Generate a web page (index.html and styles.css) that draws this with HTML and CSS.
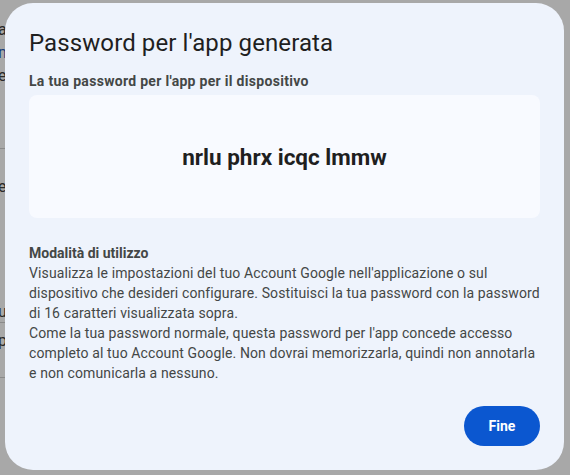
FILE: index.html
```html
<!DOCTYPE html>
<html lang="it">
<head>
<meta charset="utf-8">
<title>Password per l'app generata</title>
<link rel="stylesheet" href="styles.css">
</head>
<body>
<div class="page">
  <div class="strip">
    <div class="bg-line t1">a</div>
    <div class="bg-line t2">m</div>
    <div class="bg-line t3">er</div>
    <div class="rule r1"></div>
    <div class="bg-line t4">e</div>
    <div class="bg-line t5">u</div>
    <div class="rule r2"></div>
    <div class="bg-line t6">p</div>
    <div class="rule r3"></div>
  </div>
</div>
<div class="dialog" role="dialog">
  <h1 class="title">Password per l'app generata</h1>
  <div class="label">La tua password per l'app per il dispositivo</div>
  <div class="pwbox"><span class="pw">nrlu phrx icqc lmmw</span></div>
  <div class="howto">
    <div class="howto-title">Modalità di utilizzo</div>
    <p class="howto-text">Visualizza le impostazioni del tuo Account Google nell'applicazione o sul dispositivo che desideri configurare. Sostituisci la tua password con la password di 16 caratteri visualizzata sopra.</p>
    <p class="howto-text">Come la tua password normale, questa password per l'app concede accesso completo al tuo Account Google. Non dovrai memorizzarla, quindi non annotarla e non comunicarla a nessuno.</p>
  </div>
  <div class="actions"><button class="btn">Fine</button></div>
</div>
</body>
</html>
```
FILE: styles.css
```css
html, body {
  margin: 0;
  padding: 0;
  height: 100%;
}
body {
  background: #a8a8a8;
  font-family: Roboto, "Liberation Sans", Arial, sans-serif;
  overflow: hidden;
}
.page {
  height: 475px;
}
.strip {
  width: 12px;
  overflow: hidden;
  display: flex;
  flex-direction: column;
  padding-top: 20px;
}
.bg-line {
  font-size: 16px;
  line-height: 20px;
  color: #2a2a2a;
  white-space: nowrap;
  margin-left: -2px;
}
.t2 { margin-top: 3px; color: #173b7a; }
.t3 { margin-top: 3px; }
.rule { height: 1px; background: #8a8a8a; width: 12px; }
.r1 { margin-top: 62px; }
.t4 { margin-top: 28px; }
.t5 { margin-top: 105px; }
.r2 { margin-top: 0px; }
.t6 { margin-top: 8px; }
.r3 { margin-top: 26px; }

.dialog {
  position: fixed;
  left: 5px;
  top: 3px;
  width: 559px;
  height: 467px;
  box-sizing: border-box;
  background: #eef3fc;
  border-radius: 28px;
  padding: 24px 24px 24px 24px;
  display: flex;
  flex-direction: column;
}
.title {
  margin: 0;
  font-size: 24px;
  line-height: 32px;
  font-weight: 400;
  color: #1f1f1f;
  letter-spacing: 0.1px;
}
.label {
  margin-top: 12px;
  font-size: 14px;
  line-height: 20px;
  font-weight: 700;
  color: #444746;
  letter-spacing: 0.3px;
}
.pwbox {
  margin-top: 4px;
  height: 123px;
  background: #f8faff;
  border-radius: 8px;
  display: flex;
  align-items: center;
  justify-content: center;
}
.pw {
  font-size: 22.5px;
  font-weight: 700;
  color: #1f1f1f;
  letter-spacing: 0;
}
.howto {
  margin-top: 25px;
  color: #444746;
  font-size: 14px;
  line-height: 20px;
}
.howto-title {
  font-weight: 700;
}
.howto-text {
  margin: 0;
  letter-spacing: 0.12px;
}
.actions {
  margin-top: auto;
  display: flex;
  justify-content: flex-end;
}
.btn {
  width: 76px;
  height: 40px;
  border: none;
  border-radius: 20px;
  background: #0b57d0;
  color: #ffffff;
  font-family: Roboto, "Liberation Sans", Arial, sans-serif;
  font-size: 14px;
  font-weight: 700;
  margin-bottom: 0;
}
```
